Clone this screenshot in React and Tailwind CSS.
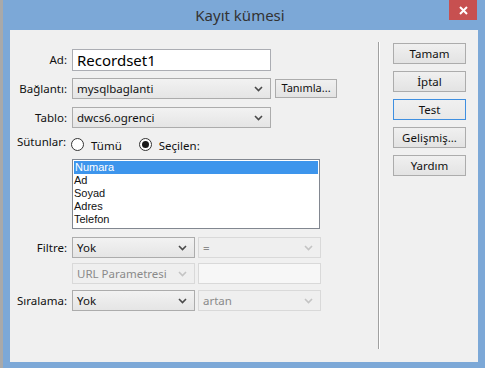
import React from 'react';

const font = { fontFamily: '"Noto Sans", "Open Sans", sans-serif' };
const listFont = { fontFamily: '"Liberation Sans", Arial, sans-serif' };

const Chevron = ({ disabled }) => (
    <svg width="9" height="6" viewBox="0 0 9 6" className="shrink-0">
        <polyline points="1,1 4.5,4.5 8,1" fill="none" stroke={disabled ? '#c4c4c4' : '#4a4a4a'} strokeWidth="1.6" />
    </svg>
);

const Select = ({ value, width, disabled }) => (
    <div
        className={`flex items-center justify-between h-[21px] pl-[4px] pr-[7px] border text-[11.5px] leading-none ${
            disabled
                ? 'border-[#d9d9d9] bg-[#efefef] text-[#8a8a8a]'
                : 'border-[#acacac] bg-gradient-to-b from-[#f2f2f2] to-[#e5e5e5] text-[#111]'
        } ${width}`}
    >
        <span>{value}</span>
        <Chevron disabled={disabled} />
    </div>
);

const Label = ({ children }) => (
    <div className="w-[58px] text-right text-[11.5px] text-[#111] pr-[1px] leading-none">{children}</div>
);

const Radio = ({ checked }) => (
    <div className="w-[13px] h-[13px] rounded-full border border-[#333] bg-white flex items-center justify-center">
        {checked && <div className="w-[7px] h-[7px] rounded-full bg-[#1a1a1a]" />}
    </div>
);

const Button = ({ children, focused }) => (
    <div
        className={`h-[21px] w-[73px] flex items-center justify-center text-[11.5px] text-[#111] border bg-gradient-to-b ${
            focused ? 'border-[#3f8fe0] from-[#f0f0f0] to-[#e8e8e8]' : 'border-[#acacac] from-[#f0f0f0] to-[#e3e3e3]'
        }`}
    >
        {children}
    </div>
);

const columns = ['Numara', 'Ad', 'Soyad', 'Adres', 'Telefon'];

export default function App() {
    return (
        <div className="w-[485px] h-[368px] bg-[#7ca8d7] flex relative overflow-hidden" style={font}>
            {/* strip of the window behind */}
            <div className="w-[3px] h-full bg-[#a9a9a9]" />
            <div className="flex-1 flex flex-col">
                {/* title bar */}
                <div className="h-[30px] flex items-center justify-center relative">
                    <span className="text-[15px] text-[#333] ml-[-8px] mt-[1px]">Kayıt kümesi</span>
                    <div className="absolute top-0 right-[8px] w-[28px] h-[20px] bg-[#c75050] flex items-center justify-center">
                        <svg width="9" height="9" viewBox="0 0 9 9">
                            <path d="M1 1 L8 8 M8 1 L1 8" stroke="white" strokeWidth="2" />
                        </svg>
                    </div>
                </div>
                {/* client area */}
                <div className="ml-[7px] mr-[7px] mb-[6px] h-[332px] bg-[#f0f0f0] flex">
                    <div className="w-[368px] flex flex-col pt-[19px]">
                        <div className="flex items-center h-[22px]">
                            <Label>Ad:</Label>
                            <div className="ml-[4px] w-[199px] h-[22px] border border-[#abadb3] bg-white flex items-center pl-[4px] text-[15px] text-black">
                                Recordset1
                            </div>
                        </div>
                        <div className="flex items-center mt-[7px]">
                            <Label>Bağlantı:</Label>
                            <div className="ml-[4px]">
                                <Select value="mysqlbaglanti" width="w-[199px]" />
                            </div>
                            <div className="ml-[4px] h-[19px] w-[62px] border border-[#acacac] bg-gradient-to-b from-[#f0f0f0] to-[#e3e3e3] flex items-center justify-center text-[11px] text-[#111] whitespace-nowrap">
                                Tanımla...
                            </div>
                        </div>
                        <div className="flex items-center mt-[8px]">
                            <Label>Tablo:</Label>
                            <div className="ml-[4px]">
                                <Select value="dwcs6.ogrenci" width="w-[199px]" />
                            </div>
                        </div>
                        <div className="flex items-center mt-[9px] h-[14px]">
                            <div className="w-[56px] text-right text-[11.5px] text-[#111] leading-none mt-[-4px]">Sütunlar:</div>
                            <div className="ml-[5px]"><Radio /></div>
                            <span className="ml-[7px] text-[11.5px] text-[#111] mt-[3px]">Tümü</span>
                            <div className="ml-[17px]"><Radio checked /></div>
                            <span className="ml-[7px] text-[11.5px] text-[#111] mt-[3px]">Seçilen:</span>
                        </div>
                        <div
                            className="ml-[62px] mt-[8px] w-[248px] h-[70px] border border-[#828790] bg-white flex flex-col text-[11px] leading-[13px] pt-[1px]"
                            style={listFont}
                        >
                            {columns.map((c, i) => (
                                <div
                                    key={c}
                                    className={`h-[13px] pl-[1px] ${i === 0 ? 'bg-[#3d95ec] text-white mx-[1px]' : 'text-[#111]'}`}
                                >
                                    {c}
                                </div>
                            ))}
                        </div>
                        <div className="flex items-center mt-[8px]">
                            <Label>Filtre:</Label>
                            <div className="ml-[4px]">
                                <Select value="Yok" width="w-[123px]" />
                            </div>
                            <div className="ml-[3px]">
                                <Select value="=" width="w-[123px]" disabled />
                            </div>
                        </div>
                        <div className="flex items-center mt-[5px]">
                            <div className="w-[58px]" />
                            <div className="ml-[4px]">
                                <Select value="URL Parametresi" width="w-[123px]" disabled />
                            </div>
                            <div className="ml-[3px] w-[123px] h-[21px] border border-[#d9d9d9] bg-[#f7f7f7]" />
                        </div>
                        <div className="flex items-center mt-[6px]">
                            <Label>Sıralama:</Label>
                            <div className="ml-[4px]">
                                <Select value="Yok" width="w-[123px]" />
                            </div>
                            <div className="ml-[3px]">
                                <Select value="artan" width="w-[123px]" disabled />
                            </div>
                        </div>
                    </div>
                    {/* separator */}
                    <div className="mt-[12px] h-[307px] w-[2px] flex">
                        <div className="w-px h-full bg-[#a0a0a0]" />
                        <div className="w-px h-full bg-white" />
                    </div>
                    <div className="ml-[13px] mt-[13px] flex flex-col gap-[7px]">
                        <Button>Tamam</Button>
                        <Button>İptal</Button>
                        <Button focused>Test</Button>
                        <Button>Gelişmiş...</Button>
                        <Button>Yardım</Button>
                    </div>
                </div>
            </div>
        </div>
    );
}
